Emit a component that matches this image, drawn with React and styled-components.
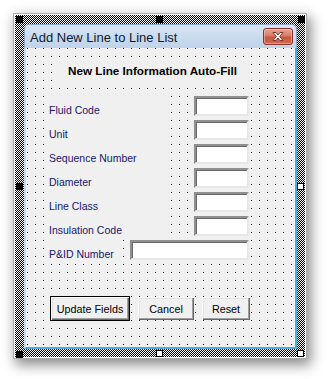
import React from 'react'
import styled, { createGlobalStyle } from 'styled-components'

const GlobalStyle = createGlobalStyle`
  html, body {
    margin: 0;
    padding: 0;
    background: #ffffff;
    font-family: 'Liberation Sans', Arial, sans-serif;
  }
`

const Page = styled.div`
  width: 328px;
  height: 379px;
  padding: 13px 0 0 13px;
  box-sizing: border-box;
`

const DesignerFrame = styled.div`
  width: 294px;
  height: 346px;
  box-sizing: border-box;
  border: 1px solid #a9a9a9;
  border-top-color: #8db6e2;
  padding: 1px;
  background: #fff;
  box-shadow: 3px 5px 12px 1px rgba(0, 0, 0, 0.45);
`

const Hatch = styled.div`
  position: relative;
  height: 100%;
  box-sizing: border-box;
  padding: 9px 8px 8px 9px;
  background: repeating-conic-gradient(#000 0 25%, #fff 0 50%) 0 0 / 2px 2px;
`

const Handle = styled.span`
  position: absolute;
  width: 7px;
  height: 7px;
  box-sizing: border-box;
  border: 1px solid #000;
  background: ${({ $filled }) => ($filled ? '#000' : '#fff')};
  left: ${({ $x }) => $x}px;
  top: ${({ $y }) => $y}px;
`

const Form = styled.div`
  height: 100%;
  display: flex;
  flex-direction: column;
`

const TitleBar = styled.div`
  height: 24px;
  flex: none;
  box-sizing: border-box;
  display: flex;
  align-items: center;
  justify-content: space-between;
  padding: 0 3px 0 5px;
  border: 1px solid #8aa6c8;
  border-bottom: none;
  border-radius: 5px 5px 0 0;
  background: linear-gradient(#d7e4f3, #c0d3ea);
`

const Title = styled.span`
  font-size: 13px;
  color: #0f1a2e;
  padding-top: 1px;
`

const CloseButton = styled.div`
  width: 30px;
  height: 17px;
  box-sizing: border-box;
  display: flex;
  align-items: center;
  justify-content: center;
  border: 1px solid #8a3428;
  border-radius: 3px;
  background: linear-gradient(#e8a496 0%, #d77966 48%, #c8553f 52%, #cf6a52 100%);
  box-shadow: inset 0 0 0 1px rgba(255, 255, 255, 0.35);
`

const Body = styled.div`
  flex: 1;
  display: flex;
  flex-direction: column;
  align-items: flex-start;
  border-left: 2px solid #c6d9ee;
  border-right: 2px solid #3fb2e4;
  border-bottom: 2px solid #3fb2e4;
  background-color: #000;
  background-image: linear-gradient(to bottom, transparent 1px, #f0f0f0 1px),
    linear-gradient(to right, transparent 1px, #f0f0f0 1px);
  background-size: 8px 8px;
  background-position: 1px 0;
`

const Heading = styled.div`
  margin: 13px 0 0 32px;
  padding: 3px 10px;
  background: #f0f0f0;
  font-size: 11.7px;
  font-weight: bold;
  line-height: 14px;
  color: #000;
`

const Fields = styled.div`
  margin: 15px 0 0 21px;
  width: 202px;
  display: flex;
  flex-direction: column;
`

const Row = styled.div`
  height: 24px;
  display: flex;
  justify-content: space-between;
`

const Label = styled.span`
  width: ${({ $width }) => $width}px;
  box-sizing: border-box;
  display: flex;
  align-items: flex-end;
  padding: 0 0 3px 2px;
  background: #f0f0f0;
  font-size: 10.5px;
  line-height: 13px;
  color: #16166e;
  white-space: nowrap;
`

const TextBox = styled.div`
  width: ${({ $width }) => $width}px;
  height: 20px;
  box-sizing: border-box;
  background: #fff;
  border: 2px solid;
  border-color: #8f8f8f #e6e6e6 #e6e6e6 #8f8f8f;
  box-shadow: inset 1px 1px 0 #6a6a6a;
`

const Buttons = styled.div`
  margin: 32px 0 0 24px;
  display: flex;
  align-items: center;
  gap: 8px;
`

const Button = styled.div`
  width: ${({ $width }) => $width}px;
  height: ${({ $default }) => ($default ? 25 : 23)}px;
  box-sizing: border-box;
  display: flex;
  align-items: center;
  justify-content: center;
  font-size: 10.8px;
  color: #000;
  background: #f0f0f0;
  border: ${({ $default }) => ($default ? '1px solid #000' : 'none')};
  box-shadow: inset 1px 1px 0 #fff, inset -1px -1px 0 #696969, inset -2px -2px 0 #a0a0a0,
    inset 2px 2px 0 #e3e3e3;
`

const fields = [
  { label: 'Fluid Code', labelWidth: 122, width: 55 },
  { label: 'Unit', labelWidth: 122, width: 55 },
  { label: 'Sequence Number', labelWidth: 122, width: 55 },
  { label: 'Diameter', labelWidth: 122, width: 55 },
  { label: 'Line Class', labelWidth: 122, width: 55 },
  { label: 'Insulation Code', labelWidth: 122, width: 55 },
  { label: 'P&ID Number', labelWidth: 73, width: 119 },
]

const handles = [
  { x: 1, y: 1, filled: true },
  { x: 141, y: 1, filled: true },
  { x: 283, y: 1, filled: true },
  { x: 1, y: 168, filled: true },
  { x: 282, y: 168 },
  { x: 1, y: 336, filled: true },
  { x: 141, y: 335 },
  { x: 282, y: 335 },
]

export default function App() {
  return (
    <Page>
      <GlobalStyle />
      <DesignerFrame>
        <Hatch>
          <Form>
            <TitleBar>
              <Title>Add New Line to Line List</Title>
              <CloseButton>
                <svg width="14" height="11" viewBox="0 0 14 11">
                  <path
                    d="M2 1.5 L5 1.5 L7 4 L9 1.5 L12 1.5 L8.6 5.5 L12 9.5 L9 9.5 L7 7 L5 9.5 L2 9.5 L5.4 5.5 Z"
                    fill="#fff"
                    stroke="#6b2a20"
                    strokeWidth="0.9"
                    strokeLinejoin="round"
                  />
                </svg>
              </CloseButton>
            </TitleBar>
            <Body>
              <Heading>New Line Information Auto-Fill</Heading>
              <Fields>
                {fields.map((f) => (
                  <Row key={f.label}>
                    <Label $width={f.labelWidth}>{f.label}</Label>
                    <TextBox $width={f.width} />
                  </Row>
                ))}
              </Fields>
              <Buttons>
                <Button $width={80} $default>
                  Update Fields
                </Button>
                <Button $width={56}>Cancel</Button>
                <Button $width={48}>Reset</Button>
              </Buttons>
            </Body>
          </Form>
          {handles.map((h, i) => (
            <Handle key={i} $x={h.x} $y={h.y} $filled={h.filled} />
          ))}
        </Hatch>
      </DesignerFrame>
    </Page>
  )
}
